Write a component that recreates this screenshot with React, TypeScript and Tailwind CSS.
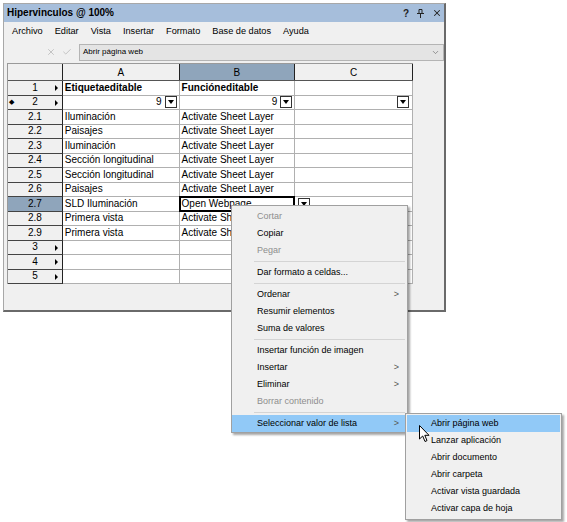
import { X, Check, ChevronDown } from 'lucide-react'

const font = { fontFamily: '"Liberation Sans", Arial, sans-serif' }

type Row = { id: string; a?: string; b?: string; bold?: boolean; arrow?: boolean; mark?: boolean; drop?: boolean; sel?: boolean; open?: boolean }

const rows: Row[] = [
  { id: '1', a: 'Etiquetaeditable', b: 'Funcióneditable', bold: true, arrow: true },
  { id: '2', arrow: true, mark: true, drop: true },
  { id: '2.1', a: 'Iluminación', b: 'Activate Sheet Layer' },
  { id: '2.2', a: 'Paisajes', b: 'Activate Sheet Layer' },
  { id: '2.3', a: 'Iluminación', b: 'Activate Sheet Layer' },
  { id: '2.4', a: 'Sección longitudinal', b: 'Activate Sheet Layer' },
  { id: '2.5', a: 'Sección longitudinal', b: 'Activate Sheet Layer' },
  { id: '2.6', a: 'Paisajes', b: 'Activate Sheet Layer' },
  { id: '2.7', a: 'SLD Iluminación', b: 'Open Webpage', sel: true, open: true },
  { id: '2.8', a: 'Primera vista', b: 'Activate Sheet Layer' },
  { id: '2.9', a: 'Primera vista', b: 'Activate Sheet Layer' },
  { id: '3', arrow: true },
  { id: '4', arrow: true },
  { id: '5', arrow: true },
]

function DropBtn() {
  return (
    <div className="w-[12px] h-[12px] border border-[#333] bg-white flex items-center justify-center shrink-0">
      <div className="w-0 h-0 border-l-[3px] border-r-[3px] border-t-[4px] border-l-transparent border-r-transparent border-t-black" />
    </div>
  )
}

function Tri() {
  return <div className="w-0 h-0 border-t-[3px] border-b-[3px] border-l-[3px] border-t-transparent border-b-transparent border-l-black" />
}

type Item = { label: string; disabled?: boolean; sub?: boolean; active?: boolean } | 'sep'

const menu: Item[] = [
  { label: 'Cortar', disabled: true },
  { label: 'Copiar' },
  { label: 'Pegar', disabled: true },
  'sep',
  { label: 'Dar formato a celdas...' },
  'sep',
  { label: 'Ordenar', sub: true },
  { label: 'Resumir elementos' },
  { label: 'Suma de valores' },
  'sep',
  { label: 'Insertar función de imagen' },
  { label: 'Insertar', sub: true },
  { label: 'Eliminar', sub: true },
  { label: 'Borrar contenido', disabled: true },
  'sep',
  { label: 'Seleccionar valor de lista', sub: true, active: true },
]

const subMenu = ['Abrir página web', 'Lanzar aplicación', 'Abrir documento', 'Abrir carpeta', 'Activar vista guardada', 'Activar capa de hoja']

export default function App() {
  return (
    <div className="relative w-[567px] h-[522px] bg-white overflow-hidden" style={font}>
      {/* window */}
      <div className="ml-[3px] mt-[3px] w-[443px] h-[309px] bg-[#f0f0f0] border border-[#a8a8a8] border-r-2 border-b-2 border-r-[#6a6a6a] border-b-[#6a6a6a] flex flex-col">
        <div className="h-[18px] bg-[#a6bedb] flex items-center pl-[3px] pr-[2px]">
          <span className="text-[10px] font-bold text-black leading-none">Hipervinculos @ 100%</span>
          <div className="ml-auto flex items-center gap-[8px] text-[10px] font-bold text-[#222]">
            <span>?</span>
            <svg width="7" height="9" viewBox="0 0 7 9">
              <path d="M2 0.5h3v4H2z M0 4.5h7 M3.5 4.5v4.5" fill="none" stroke="#222" strokeWidth="1" />
            </svg>
            <X size={10} strokeWidth={2.5} className="text-[#222]" />
          </div>
        </div>
        <div className="h-[19px] flex items-center pl-[8px] gap-[12px] text-[9.2px] text-black">
          <span>Archivo</span>
          <span>Editar</span>
          <span>Vista</span>
          <span>Insertar</span>
          <span>Formato</span>
          <span>Base de datos</span>
          <span>Ayuda</span>
        </div>
        <div className="h-[22px] flex items-center pl-[42px] gap-[6px]">
          <X size={10} strokeWidth={1.5} className="text-[#a8a8a8]" />
          <Check size={10} strokeWidth={1.5} className="text-[#a8a8a8]" />
          <div className="flex-1 h-[17px] bg-[#e4e4e4] border border-[#b4b4b4] flex items-center pl-[3px] pr-[3px] ml-[1px]">
            <span className="text-[8px] text-black">Abrir página web</span>
            <ChevronDown size={9} className="ml-auto text-[#777]" />
          </div>
        </div>
        {/* grid */}
        <div className="pl-[3px]">
          <div className="w-[406px] border-t border-l border-[#9a9a9a] text-[10px] text-black">
            <div className="flex h-[17px] bg-[#f0f0f0] border-b border-[#555]">
              <div className="w-[55px] border-r border-[#222]" />
              <div className="w-[117px] border-r border-[#222] flex items-center justify-center">A</div>
              <div className="w-[116px] border-r border-[#222] bg-[#8fa5bb] flex items-center justify-center">B</div>
              <div className="w-[118px] border-r border-[#222] flex items-center justify-center">C</div>
            </div>
            {rows.map((r) => (
              <div key={r.id} className="flex h-[14.5px] leading-none">
                <div className={`w-[55px] border-r border-b border-r-[#222] border-b-[#444] relative flex items-center justify-center ${r.sel ? 'bg-[#8fa5bb]' : 'bg-[#f0f0f0]'}`}>
                  {r.mark && <span className="absolute left-[1px] top-[2px] text-[7px]">◆</span>}
                  <span>{r.id}</span>
                  {r.arrow && <div className="absolute right-[4px] top-[4px]"><Tri /></div>}
                </div>
                <div className={`w-[117px] border-r border-b border-[#b0b0b0] bg-white flex items-center pl-[2px] whitespace-nowrap overflow-hidden ${r.bold ? 'font-bold' : ''}`}>
                  {r.drop ? (
                    <div className="ml-auto flex items-center gap-[3px] pr-[2px]"><span>9</span><DropBtn /></div>
                  ) : r.a}
                </div>
                <div className={`w-[116px] border-r border-b border-[#b0b0b0] bg-white flex items-center pl-[2px] whitespace-nowrap relative ${r.bold ? 'font-bold' : ''}`}>
                  {r.drop ? (
                    <div className="ml-auto flex items-center gap-[3px] pr-[2px]"><span>9</span><DropBtn /></div>
                  ) : r.b}
                  {r.sel && <div className="absolute -left-[1px] -top-[1px] -right-[1px] -bottom-[1px] border-2 border-black" />}
                </div>
                <div className="w-[118px] border-r border-b border-[#b0b0b0] bg-white flex items-center">
                  {r.drop && <div className="ml-auto pr-[3px]"><DropBtn /></div>}
                  {r.open && <div className="ml-[3px]"><DropBtn /></div>}
                </div>
              </div>
            ))}
          </div>
        </div>
      </div>

      {/* context menu */}
      <div className="absolute left-[231px] top-[205px] w-[177px] h-[228px] bg-[#f0f0f0] border border-[#a0a0a0] shadow-[2px_2px_2px_rgba(0,0,0,0.35)] pt-[1.5px] text-[9px] leading-none">
        {menu.map((m, i) =>
          m === 'sep' ? (
            <div key={i} className="h-[5px] flex items-center pl-[22px] pr-[2px]">
              <div className="w-full h-px bg-[#d4d4d4]" />
            </div>
          ) : (
            <div key={i} className={`h-[17px] flex items-center pl-[25px] pr-[8px] ${m.active ? 'bg-[#91c9f7]' : ''} ${m.disabled ? 'text-[#8e8e8e]' : 'text-black'}`}>
              <span>{m.label}</span>
              {m.sub && <span className="ml-auto text-[#555] text-[9px]">&gt;</span>}
            </div>
          )
        )}
      </div>

      {/* submenu */}
      <div className="absolute left-[405px] top-[413px] w-[157px] h-[107px] bg-[#f0f0f0] border border-[#a0a0a0] shadow-[2px_2px_2px_rgba(0,0,0,0.35)] pt-[0.5px] px-[1px] text-[9px] leading-none">
        {subMenu.map((s, i) => (
          <div key={s} className={`h-[17px] flex items-center pl-[24px] text-black ${i === 0 ? 'bg-[#91c9f7]' : ''}`}>{s}</div>
        ))}
      </div>

      {/* cursor */}
      <svg className="absolute left-[419px] top-[425px]" width="12" height="18" viewBox="0 0 12 18">
        <path d="M0.5 0.5 L0.5 14 L3.7 11 L6 16.5 L8 15.6 L5.8 10.3 L10 10.3 Z" fill="white" stroke="black" strokeWidth="1" strokeLinejoin="round" />
      </svg>
    </div>
  )
}
